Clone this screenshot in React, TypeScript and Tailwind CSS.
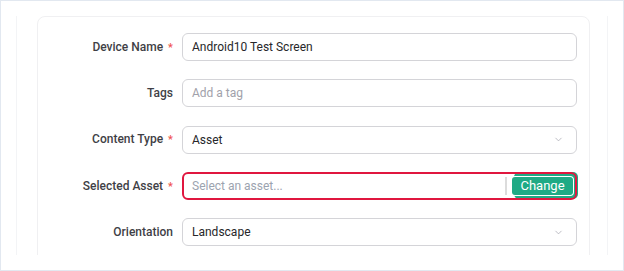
import { ChevronDown } from "lucide-react";

type Field = {
  label: string;
  required?: boolean;
  kind: "text" | "select" | "asset";
  value?: string;
  placeholder?: string;
};

const fields: Field[] = [
  { label: "Device Name", required: true, kind: "text", value: "Android10 Test Screen" },
  { label: "Tags", kind: "text", placeholder: "Add a tag" },
  { label: "Content Type", required: true, kind: "select", value: "Asset" },
  { label: "Selected Asset", required: true, kind: "asset", placeholder: "Select an asset..." },
  { label: "Orientation", kind: "select", value: "Landscape" },
];

function Control({ field }: { field: Field }) {
  if (field.kind === "asset") {
    return (
      <div className="relative h-[28px] flex-1">
        <div className="absolute right-[-1px] top-0 h-[27px] w-[64px] rounded-[5px] bg-[#1faa85]" />
        <div className="relative flex h-full items-center rounded-[6px] border-2 border-[#e0173f]">
          <span className="flex-1 pl-[8px] text-[#9ca3af]">{field.placeholder}</span>
          <div className="h-[18px] w-[2px] bg-[#dcdcdc]" />
          <button className="ml-[5px] mr-[2px] h-[18px] w-[61px] rounded-[3px] bg-[#1faa85] text-center text-[13px] leading-[18px] text-white ring-1 ring-white">
            Change
          </button>
        </div>
      </div>
    );
  }
  return (
    <div className="flex h-[28px] flex-1 items-center rounded-[6px] border border-[#d4d4d8] bg-white pl-[9px] pr-[12px]">
      <span className={field.value ? "flex-1 text-[#27272a]" : "flex-1 text-[#a1a1aa]"}>
        {field.value ?? field.placeholder}
      </span>
      {field.kind === "select" && <ChevronDown className="h-[11px] w-[11px] text-[#a1a1aa]" strokeWidth={1.5} />}
    </div>
  );
}

export default function App() {
  return (
    <div
      className="h-[271px] w-[624px] overflow-hidden border border-[#e2e8f0] bg-white text-[12px]"
      style={{ fontFamily: "Roboto, Inter, sans-serif" }}
    >
      <div className="mx-[15px] mt-[15px] h-[239px] overflow-hidden border-x border-[#f3f4f6] pl-[20px] pr-[17px]">
        <div className="h-[260px] rounded-[8px] border border-[#f0f0f2] pt-[16px] pr-[12px]">
          <div className="flex flex-col gap-[18.25px]">
            {fields.map((f) => (
              <div key={f.label} className="flex items-center">
                <div className="w-[144px] pr-[9px] text-right font-medium text-[#3f3f46]">
                  {f.label}
                  {f.required && <span className="ml-[5px] text-[11px] text-[#f05252]">*</span>}
                </div>
                <Control field={f} />
              </div>
            ))}
          </div>
        </div>
      </div>
    </div>
  );
}
